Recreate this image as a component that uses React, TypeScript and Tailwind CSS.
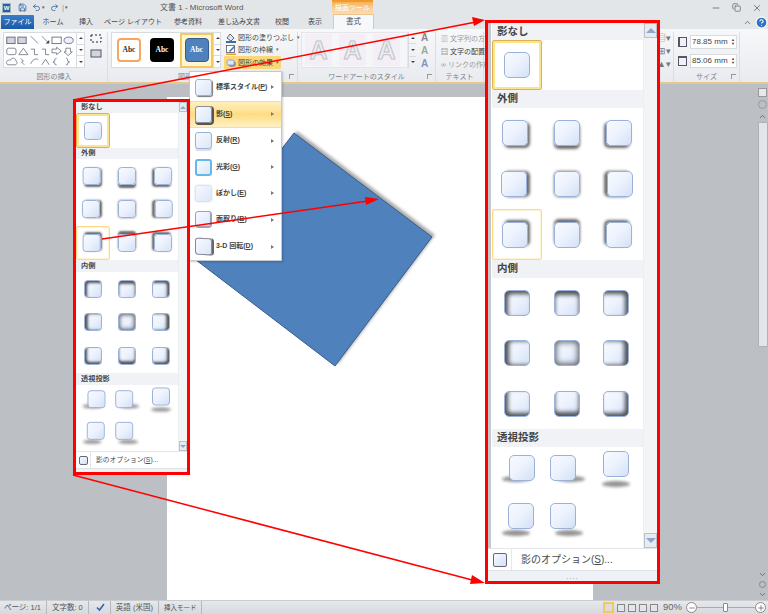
import React from "react";
import { ChevronUp, ChevronDown, Minus, Plus, HelpCircle, Undo2, Redo2, Save, X, Copy } from "lucide-react";

const FONT = '"Liberation Sans","Noto Sans CJK JP",sans-serif';
type Sh = { outer?: string; inner?: string; persp?: "L" | "R" | "B" | "BL" | "BR"; dx?: number; dy?: number };

function Swatch({ size, sh }: { size: number; sh?: Sh }) {
  const s = size / 26;
  const conv = (v: string) => v.replace(/(-?\d+(\.\d+)?)p/g, (_, n) => `${Number(n) * s}px`);
  const boxShadow = [sh?.outer ? conv(sh.outer) : "", sh?.inner ? "inset " + conv(sh.inner) : ""].filter(Boolean).join(",") || undefined;
  const p = sh?.persp;
  return (
    <div className="relative" style={{ width: size, height: size, transform: `translate(${(sh?.dx ?? 0) * s}px,${(sh?.dy ?? 0) * s}px)` }}>
      {p && (
        <div
          className="absolute rounded-[50%] bg-[#666] blur-[1.5px] opacity-70"
          style={{
            height: 6 * s,
            width: 28 * s,
            top: (p === "B" ? 30 : p === "L" || p === "R" ? 21 : 27) * s,
            left: (p === "L" ? -7 : p === "R" ? 7 : p === "BL" ? -6 : p === "BR" ? 5 : -1) * s,
          }}
        />
      )}
      <div
        className="absolute inset-0 border border-[#9bb1d9] bg-gradient-to-br from-[#f7faff] via-[#ecf2fd] to-[#d3e0f7]"
        style={{ borderRadius: 5 * s, boxShadow }}
      />
    </div>
  );
}

const C = "#6e6e6e";
const outer: Sh[] = [
  { outer: `2p 2p 3p ${C}`, dx: -2 }, { outer: `0p 3p 3p ${C}` }, { outer: `-2p 2p 3p ${C}`, dx: 3 },
  { outer: `3p 0p 3p ${C}`, dx: -3 }, { outer: `0p 0p 3p ${C}` }, { outer: `-3p 0p 3p ${C}`, dx: 4 },
  { outer: `2p -2p 3p ${C}`, dx: -2 }, { outer: `0p -3p 3p ${C}` }, { outer: `-2p -2p 3p ${C}`, dx: 3 },
];
const I = "#4f5359";
const inner: Sh[] = [
  { inner: `3p 3p 4p ${I}` }, { inner: `0p 4p 4p ${I}` }, { inner: `-3p 3p 4p ${I}` },
  { inner: `4p 0p 4p ${I}` }, { inner: `0p 0p 6p 1p ${I}` }, { inner: `-4p 0p 4p ${I}` },
  { inner: `3p -3p 4p ${I}` }, { inner: `0p -4p 4p ${I}` }, { inner: `-3p -3p 4p ${I}` },
];
const persp: Sh[] = [
  { persp: "L", dx: 5, dy: -4 }, { persp: "R", dx: -4, dy: -4 }, { persp: "B", dy: -8 },
  { persp: "BL", dx: 4, dy: -6 }, { persp: "BR", dx: -4, dy: -6 },
];

function Hdr({ h, cls, children }: { h: number; cls: string; children: React.ReactNode }) {
  return (
    <div className={`flex items-center bg-[#f0f2f5] font-bold text-[#444] ${cls}`} style={{ height: h }}>
      {children}
    </div>
  );
}

function Cell({ size, sh, sel }: { size: number; sh?: Sh; sel?: "strong" | "pale" }) {
  const b = sel === "strong" ? "border border-[#dfb052] rounded-[2px] shadow-[inset_0_0_0_2px_#fce48c]" : sel === "pale" ? "border border-[#fbdc84] rounded-[2px] shadow-[inset_0_0_0_1px_#fff4cf]" : "";
  return <div className={`flex items-center justify-center ${b}`}><Swatch size={size} sh={sh} /></div>;
}

function Panel({ big }: { big: boolean }) {
  const size = big ? 26 : 18;
  const h = big
    ? { h1: 17, sel: 50, h2: 18, g1: 152, h3: 18, g2: 151, h4: 18, g3: 100, foot: 22, grip: 11, colW: 49.7 }
    : { h1: 11, sel: 35, h2: 11, g1: 101, h3: 12, g2: 101, h4: 12, g3: 66, foot: 17, grip: 4, colW: 34 };
  const tcls = big ? "text-[10.5px] pl-[5px]" : "text-[7.2px] pl-[5px]";
  return (
    <div
      className={`absolute box-border border-[3px] border-[#ff0000] bg-white flex flex-col overflow-hidden ${big ? "left-[485px] top-[20px] w-[175px] h-[564px]" : "left-[73px] top-[99px] w-[117px] h-[376px]"}`}
    >
      <div className="flex flex-1 min-h-0">
        {big && <div className="w-[3px] bg-[#c4c8cd] shrink-0 mr-[1px]" />}
        <div className="flex flex-col" style={{ width: big ? 151 : 102 }}>
          <Hdr h={h.h1} cls={tcls}>影なし</Hdr>
          <div className="grid" style={{ height: h.sel, gridTemplateColumns: `repeat(3,${h.colW}px)` }}>
            <Cell size={size} sel="strong" />
          </div>
          <Hdr h={h.h2} cls={tcls}>外側</Hdr>
          <div className="grid" style={{ height: h.g1, gridTemplateColumns: `repeat(3,${h.colW}px)`, gridTemplateRows: "repeat(3,1fr)" }}>
            {outer.map((o, i) => <Cell key={i} size={size} sh={o} sel={i === 6 ? "pale" : undefined} />)}
          </div>
          <Hdr h={h.h3} cls={tcls}>内側</Hdr>
          <div className="grid" style={{ height: h.g2, gridTemplateColumns: `repeat(3,${h.colW}px)`, gridTemplateRows: "repeat(3,1fr)" }}>
            {inner.map((o, i) => <Cell key={i} size={size} sh={o} />)}
          </div>
          <Hdr h={h.h4} cls={tcls}>透視投影</Hdr>
          <div className="grid" style={{ height: h.g3, gridTemplateColumns: `repeat(3,${h.colW}px)`, gridTemplateRows: "repeat(2,1fr)" }}>
            {persp.map((o, i) => <Cell key={i} size={size} sh={o} />)}
          </div>
        </div>
        <div className="flex-1 bg-[#f3f4f6] flex flex-col justify-between border-l border-[#eceef1]">
          <div className={`bg-[#e7eaef] border border-[#bcc1c9] flex items-center justify-center ${big ? "h-[15px]" : "h-[10px]"}`}>
            <div className={`border-x-transparent border-b-[#8ea6cd] ${big ? "border-x-[5px] border-b-[5px]" : "border-x-[3px] border-b-[3px]"}`} />
          </div>
          <div className={`bg-[#e7eaef] border border-[#bcc1c9] flex items-center justify-center ${big ? "h-[15px]" : "h-[10px]"}`}>
            <div className={`border-x-transparent border-t-[#8ea6cd] ${big ? "border-x-[5px] border-t-[5px]" : "border-x-[3px] border-t-[3px]"}`} />
          </div>
        </div>
      </div>
      <div className={`flex items-center border-t border-[#e3e6ea] whitespace-nowrap ${big ? "text-[10px]" : "text-[6.8px]"} text-[#4a4a4a]`} style={{ height: h.foot }}>
        <div className={`flex justify-center items-center border-r border-[#e3e6ea] h-full shrink-0 ${big ? "w-[24px]" : "w-[15px]"}`}>
          <div className={`border border-[#667] bg-gradient-to-br from-[#f7faff] to-[#d3e0f7] rounded-[2px] ${big ? "w-[14px] h-[14px]" : "w-[9px] h-[9px]"}`} />
        </div>
        <span className={big ? "pl-[9px]" : "pl-[5px]"}>影のオプション(<span className="underline">S</span>)...</span>
      </div>
      <div className="flex items-center justify-center bg-[#eef1f6] border-t border-[#dfe3e8] text-[#889] tracking-[1px] leading-none" style={{ height: h.grip, fontSize: big ? 7 : 4 }}>....</div>
    </div>
  );
}

function MenuItem({ label, k, active, icon, h }: { label: string; k: string; active?: boolean; icon: React.ReactNode; h: number }) {
  return (
    <div className={`flex items-center text-[7px] text-[#444] whitespace-nowrap ${active ? "bg-gradient-to-b from-[#fff0c0] via-[#fddc83] to-[#fff0c4] border-y border-[#f7dd98]" : ""}`} style={{ height: h }}>
      <div className="w-[26px] flex justify-center shrink-0">{icon}</div>
      <span className="font-bold flex-1">{label}(<span className="underline">{k}</span>)</span>
      <div className="border-y-[2.5px] border-l-[3px] border-y-transparent border-l-[#777] mr-[7px]" />
    </div>
  );
}

function Menu() {
  const ic = "w-[17px] h-[17px] rounded-[3px] bg-gradient-to-br from-[#f7faff] to-[#dce6f8] border";
  return (
    <div className="absolute left-[189px] top-[71px] w-[93px] h-[190px] bg-white border border-[#c6c9ce] shadow-[1px_1px_2px_rgba(0,0,0,0.2)] flex flex-col pt-[2px]">
      <MenuItem h={27} label="標準スタイル" k="P" icon={<div className={`${ic} border-[#9bb1d9] shadow-[1px_1px_1px_#777]`} />} />
      <MenuItem h={27} active label="影" k="S" icon={<div className={`${ic} border-[#8a8f99] shadow-[1px_1px_0_1px_#555]`} />} />
      <MenuItem h={26} label="反射" k="R" icon={<div className={`${ic} border-[#9bb1d9] shadow-[0_2px_1px_#ddd]`} />} />
      <MenuItem h={27} label="光彩" k="G" icon={<div className={`${ic} border-[#63b8e8] border-2`} />} />
      <MenuItem h={26} label="ぼかし" k="E" icon={<div className={`${ic} border-[#dbe3f1] shadow-[0_0_2px_#cdd7ea]`} />} />
      <MenuItem h={27} label="面取り" k="B" icon={<div className={`${ic} border-[#8ea3c9] shadow-[inset_-1px_-1px_1px_#99a]`} />} />
      <MenuItem h={27} label="3-D 回転" k="D" icon={<div className={`${ic} border-[#889] skew-y-3 shadow-[2px_0_0_#667]`} />} />
    </div>
  );
}

function Tile({ cls, text }: { cls: string; text: string }) {
  return <div className={`w-[24px] h-[24px] rounded-[4px] flex items-center justify-center text-[7.5px] font-bold ${cls}`} style={{ fontFamily: '"Liberation Serif",serif' }}>{text}</div>;
}

function ScrollBtns({ w = 9 }: { w?: number }) {
  return (
    <div className="flex flex-col border-l border-[#d8dbdf] h-full shrink-0" style={{ width: w }}>
      <div className="flex-1 flex items-center justify-center border-b border-[#d8dbdf]"><div className="border-x-[2px] border-b-[2px] border-x-transparent border-b-[#444]" /></div>
      <div className="flex-1 flex items-center justify-center border-b border-[#d8dbdf]"><div className="border-x-[2px] border-t-[2px] border-x-transparent border-t-[#444]" /></div>
      <div className="flex-1 flex items-center justify-center"><div className="border-x-[2px] border-t-[2px] border-x-transparent border-t-[#444]" /></div>
    </div>
  );
}

function Group({ w, title, children, launcher }: { w: number; title: string; children?: React.ReactNode; launcher?: boolean }) {
  return (
    <div className="flex flex-col h-full border-r border-[#e9dcc3] shrink-0 relative" style={{ width: w }}>
      <div className="flex-1 min-h-0 flex">{children}</div>
      <div className="h-[13px] pt-[3px] flex items-center justify-center text-[7px] text-[#7d8288] whitespace-nowrap">{title}</div>
      {launcher && <div className="absolute right-[3px] bottom-[3px] w-[5px] h-[5px] border-l border-t border-[#999]" />}
    </div>
  );
}

function ShapesSvg() {
  const st = { fill: "none", stroke: "#6a7583", strokeWidth: 0.9 };
  return (
    <svg width="73" height="35" viewBox="0 0 78 35">
      <rect x="3" y="3" width="9" height="7" fill="#cfd6e0" stroke="#667" />
      <rect x="15" y="3" width="9" height="7" fill="#cfd6e0" stroke="#667" />
      <path d="M29 2l8 8M41 2l7 7" {...st} />
      <path d="M49 10l-4 0 4-4z" fill="#445" />
      <rect x="52" y="3" width="10" height="7" fill="#fff" stroke="#6a7583" />
      <ellipse cx="70" cy="6.500" rx="5" ry="3.500" fill="#eef" stroke="#6a7583" />
      <rect x="3" y="15" width="10" height="7" rx="2" {...st} />
      <path d="M16 22l5-7 5 7zM29 16h4v6h4M41 16h4v6h4" {...st} />
      <path d="M52 16h5v-2l5 4-5 4v-2h-5zM67 15h5v4h2l-4.500 4-4.500-4h2z" {...st} />
      <path d="M4 33c-3-3 0-6 3-5 1-3 6-3 6 1 2 1 1 4-1 4zM18 26l3 3-2 1 3 3M29 32c2-5 5-6 8-5M41 33l4-6 4 6M57 26c-2 0-2 1-2 3l-2 1 2 1c0 2 0 2 2 2M67 26c2 0 2 1 2 3l2 1-2 1c0 2 0 2-2 2" {...st} />
    </svg>
  );
}

function FillIcon() {
  return (
    <svg width="10" height="10" viewBox="0 0 10 10"><path d="M4 1l4 4-3 3-4-3z" fill="#dfe6f1" stroke="#445" strokeWidth=".8" /><rect x="0" y="8" width="10" height="2" fill="#3f6aa8" /></svg>
  );
}
function LineIcon() {
  return (
    <svg width="10" height="10" viewBox="0 0 10 10"><rect x=".5" y=".5" width="8" height="7" fill="#fff" stroke="#556" strokeWidth=".8" /><path d="M3 6l5-5 1 1-5 5z" fill="#3f6aa8" /><rect x="0" y="8.500" width="10" height="1.500" fill="#e5a33c" /></svg>
  );
}
function FxIcon() {
  return (
    <svg width="10" height="10" viewBox="0 0 10 10"><ellipse cx="6" cy="6" rx="4" ry="3" fill="#8b97a8" /><rect x="1" y="2" width="7" height="5" rx="1.500" fill="#dce6f4" stroke="#7f97c0" strokeWidth=".8" /></svg>
  );
}

function Ribbon() {
  const rows: [string, React.ReactNode][] = [["図形の塗りつぶし", <FillIcon />], ["図形の枠線", <LineIcon />], ["図形の効果", <FxIcon />]];
  return (
    <div className="h-[55px] flex bg-gradient-to-b from-[#f7f8fa] to-[#e8ebef] border-b-2 border-[#e4c88f] pl-[1px] pt-[3px] shrink-0">
      <Group w={107} title="図形の挿入">
        <div className="ml-[2px] w-[82px] h-[36px] bg-white border border-[#d8dbdf] flex shrink-0">
          <ShapesSvg />
          <ScrollBtns w={8} />
        </div>
        <div className="flex flex-col gap-[5px] pl-[5px] pt-[2px]">
          <svg width="14" height="10"><rect x="1" y="1" width="10" height="7" fill="none" stroke="#223" strokeDasharray="2 2" /></svg>
          <svg width="14" height="10"><rect x="1" y="1" width="10" height="7" fill="#cfd6e0" stroke="#556" /></svg>
        </div>
      </Group>
      <Group w={190} title="図形のスタイル" launcher>
        <div className="ml-[3px] w-[110px] h-[36px] bg-white border border-[#d8dbdf] flex items-center shrink-0">
          <div className="flex items-center flex-1 pl-[5px] gap-[9px]">
            <Tile cls="bg-white border-2 border-[#f7a65f] text-[#333]" text="Abc" />
            <Tile cls="bg-black text-white" text="Abc" />
            <div className="w-[33px] h-[35px] border-2 border-[#f3c95f] bg-[#fff6d0] flex items-center justify-center -ml-[3px] shrink-0">
              <Tile cls="bg-[#4f81bd] border border-[#385d8a] text-white" text="Abc" />
            </div>
          </div>
          <ScrollBtns />
        </div>
        <div className="flex flex-col text-[7px] text-[#444] ml-[3px] leading-none">
          {rows.map(([t, icon], i) => (
            <div key={t} className={`flex items-center gap-[2px] pl-[2px] whitespace-nowrap ${i === 2 ? "bg-[#fcd778] h-[14px] mt-[1px] rounded-[1px] w-[57px]" : "h-[13px] w-[68px]"}`}>
              <span className="shrink-0 flex">{icon}</span>
              <span>{t}</span>
              <span className="text-[5px] text-[#666] ml-[1px]">▾</span>
            </div>
          ))}
        </div>
      </Group>
      <Group w={138} title="ワードアートのスタイル" launcher>
        <div className="ml-[3px] h-[36px] w-[107px] flex items-center gap-[7px] pl-[3px] border border-[#e4e6ea] bg-[#f5f6f8] text-[25px] font-bold leading-none overflow-hidden shrink-0">
          {[0, 1, 2].map((i) => (
            <div key={i} className="w-[27px] h-[32px] shrink-0 bg-[#f4eff6] flex items-center justify-center text-[#eceef0]" style={{ WebkitTextStroke: "1px #bfc3c8" }}>A</div>
          ))}
        </div>
        <div className="w-[8px] h-[36px]"><ScrollBtns w={8} /></div>
        <div className="flex flex-col pl-[5px] gap-[1px] text-[10px] font-bold leading-[12px] text-[#888]">
          <span>A</span><span className="text-[#9a9]">A</span><span className="text-[#7f97c0]">A</span>
        </div>
      </Group>
      <Group w={48} title="テキスト">
        <div className="flex flex-col pl-[5px] text-[7px] text-[#999] leading-[13px] whitespace-nowrap">
          <span>▥ 文字列の方向</span>
          <span className="text-[#444]">▤ 文字の配置</span>
          <span>∞ リンクの作成</span>
        </div>
      </Group>
      <Group w={190} title="配置">
        <div className="flex-1 flex flex-col items-end pr-[2px] text-[9px] leading-[13px] text-[#777]">
          <span>▤▾</span><span>⊞▾</span><span>▲▾</span>
        </div>
      </Group>
      <Group w={66} title="サイズ" launcher>
        <div className="flex flex-col gap-[5px] pl-[4px] pt-[3px]">
          {["78.85 mm", "85.06 mm"].map((v, i) => (
            <div key={v} className="flex items-center gap-[3px]">
              <div className={`w-[9px] h-[10px] border border-[#556] bg-[#eef2f8] ${i ? "border-t-2" : "border-l-2"}`} />
              <div className="w-[47px] h-[14px] bg-white border border-[#d8dbdf] text-[8px] text-[#444] flex items-center pl-[1px] justify-between pr-[1px] whitespace-nowrap overflow-hidden">
                <span>{v}</span>
                <span className="text-[4px] leading-[4px] flex flex-col"><span>▲</span><span>▼</span></span>
              </div>
            </div>
          ))}
        </div>
      </Group>
    </div>
  );
}

function Tabs() {
  const t: [string, number][] = [["ホーム", 34], ["挿入", 32], ["ページ レイアウト", 62], ["参考資料", 48], ["差し込み文書", 54], ["校閲", 32], ["表示", 34]];
  return (
    <div className="h-[14px] flex items-end relative bg-[#e3e6e9] shrink-0 text-[7px] text-[#444] pl-[1px] whitespace-nowrap">
      <div className="w-[33px] h-[14px] bg-gradient-to-b from-[#3a7cc7] to-[#1c5aa8] text-white flex items-center justify-center rounded-t-[1px]">ファイル</div>
      <div className="flex h-full items-center pl-[2px]">
        {t.map(([n, w]) => <div key={n} className="flex justify-center" style={{ width: w }}>{n}</div>)}
      </div>
      <div className="ml-[1px] w-[41px] h-[15px] -mt-[1px] bg-[#f7f8fa] border border-b-0 border-[#eec58a] flex items-center justify-center text-[7.5px]">書式</div>
      <div className="flex-1 flex items-center justify-end gap-[3px] h-full">
        <ChevronUp size={9} className="text-[#555]" />
        <HelpCircle size={13} className="text-white fill-[#2f74c4]" />
      </div>
    </div>
  );
}

function TitleBar() {
  return (
    <div className="h-[15px] flex items-center bg-[#e3e6e9] relative shrink-0 text-[8px] text-[#555]">
      <div className="flex items-center pl-[2px] w-[332px] shrink-0">
        <div className="w-[9px] h-[10px] bg-[#2b5ea8] border border-[#9bb] text-white text-[6px] font-bold leading-[8px] text-center">W</div>
        <Save size={9} className="text-[#2a5a9e] ml-[7px]" />
        <Undo2 size={9} className="text-[#2a5a9e] ml-[5px]" />
        <span className="text-[5px] ml-[1px]">▾</span>
        <Redo2 size={9} className="text-[#2a5a9e] ml-[5px]" />
        <span className="text-[#999] ml-[3px]">|</span>
        <span className="text-[5px] ml-[1px]">▾</span>
        <span className="absolute left-[160px] whitespace-nowrap">文書 1 - Microsoft Word</span>
      </div>
      <div className="w-[41px] h-[15px] bg-gradient-to-b from-[#f6b24e] via-[#f9cf9c] to-[#fbdcbc] border-t-2 border-[#f29a2e] text-[7px] text-white flex items-center justify-center whitespace-nowrap">描画ツール</div>
      <div className="flex-1 flex items-center justify-end gap-[11px] pr-[6px] text-[#667]">
        <Minus size={10} /><Copy size={9} /><X size={10} />
      </div>
    </div>
  );
}

function Workspace() {
  return (
    <div className="flex-1 flex bg-[#bcc0c5] min-h-0">
      <div className="flex-1 pl-[167px] pt-[13px]">
        <div className="w-[426px] h-full bg-white" />
      </div>
      <div className="w-[11px] flex flex-col items-center pt-[4px] text-[#555]">
        <div className="w-[9px] h-[9px] border border-[#999] bg-[#e6e8ec] mb-[3px]" />
        <div className="w-[9px] h-[9px] rounded-full border border-[#999] mb-[3px]" />
        <ChevronUp size={9} />
        <div className="w-[10px] h-[225px] bg-[#e3e5e9] border border-[#aeb2b8] rounded-[1px] mt-[1px]" />
        <div className="flex-1" />
        <ChevronDown size={9} />
        <div className="w-[7px] h-[7px] rounded-full border border-[#888] my-[2px]" />
        <ChevronDown size={9} className="mb-[1px]" />
      </div>
    </div>
  );
}

function CheckIcon() {
  return (
    <svg width="9" height="9" viewBox="0 0 9 9" className="ml-[2px]">
      <path d="M1 4.500l2.500 2.500 4.500-6" fill="none" stroke="#2f5fb0" strokeWidth="1.500" />
    </svg>
  );
}

function Status() {
  const Sep = () => <div className="w-px h-[13px] bg-[#b4b8bd] mx-[5px] shrink-0" />;
  return (
    <div className="h-[14px] flex items-center bg-gradient-to-b from-[#e6e8eb] to-[#d6d9dd] border-t border-[#c9ccd0] text-[7.5px] text-[#555] pl-[4px] shrink-0 whitespace-nowrap">
      <span>ページ: 1/1</span><Sep />
      <span>文字数: 0</span><Sep />
      <CheckIcon /><Sep />
      <span>英語 (米国)</span><Sep />
      <span className="text-[6.5px]">挿入モード</span><Sep />
      <div className="flex-1" />
      <div className="w-[11px] h-[11px] border-2 border-[#f3c95f] bg-[#d9dce0]" />
      <div className="flex gap-[3px] ml-[3px]">
        {[0, 1, 2, 3].map((i) => <div key={i} className="w-[8px] h-[8px] border border-[#888] bg-[#e3e5e8]" />)}
      </div>
      <span className="text-[9.5px] ml-[5px] text-[#666]">90%</span>
      <div className="ml-[4px] w-[11px] h-[11px] rounded-full border border-[#888] bg-white flex items-center justify-center"><Minus size={8} /></div>
      <div className="relative w-[58px] h-px bg-[#aaa] flex items-center">
        <div className="absolute left-[26px] w-[5px] h-[9px] bg-white border border-[#888] rounded-[1px]" />
      </div>
      <div className="w-[11px] h-[11px] rounded-full border border-[#888] bg-white flex items-center justify-center mr-[2px]"><Plus size={8} /></div>
    </div>
  );
}

export default function App() {
  return (
    <div className="relative w-[768px] h-[614px] overflow-hidden flex flex-col bg-white" style={{ fontFamily: FONT }}>
      <TitleBar />
      <Tabs />
      <Ribbon />
      <Workspace />
      <Status />

      <svg className="absolute inset-0 pointer-events-none" width="768" height="614">
        <polygon points="297,131 435,235 338,364 200,258" fill="#666" opacity="0.55" style={{ filter: "blur(1.5px)" }} />
        <polygon points="294,133 432,237 335,366 196,260" fill="#4f81bd" stroke="#385d8a" strokeWidth="1" />
      </svg>

      <Menu />
      <Panel big={false} />
      <Panel big />

      <svg className="absolute inset-0 pointer-events-none" width="768" height="614">
        <line x1="73" y1="100" x2="476" y2="22" stroke="#ff0000" strokeWidth="1.5" />
        <polygon points="485,20 472,17 474,26" fill="#ff0000" />
        <line x1="73" y1="475" x2="476" y2="581" stroke="#ff0000" strokeWidth="1.5" />
        <polygon points="485,583 472,575 470,584" fill="#ff0000" />
        <line x1="102" y1="239" x2="368" y2="201" stroke="#ff0000" strokeWidth="1.5" />
        <polygon points="379,199 365,197 366,205" fill="#ff0000" />
      </svg>
    </div>
  );
}
